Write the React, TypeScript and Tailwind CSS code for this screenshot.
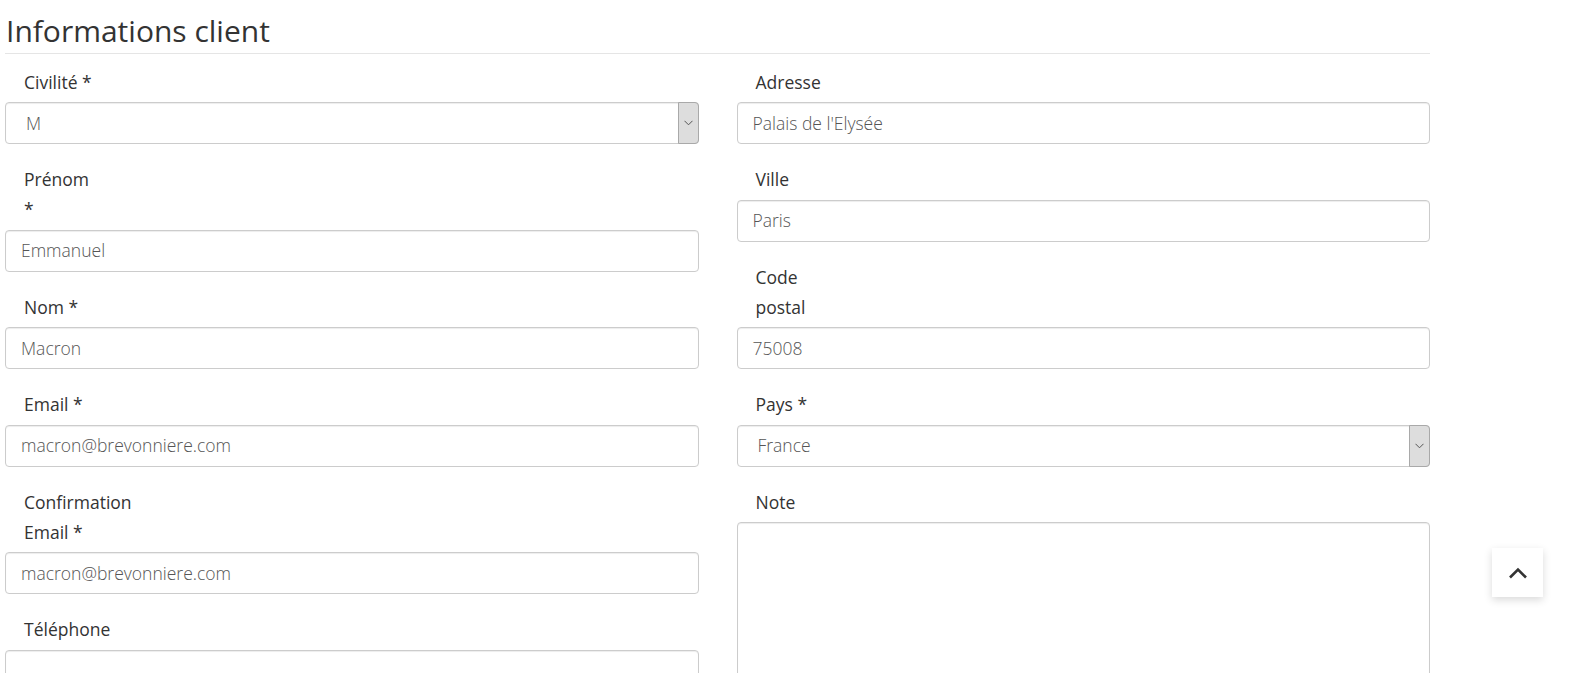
import React from "react";

const font = { fontFamily: '"Open Sans", "Noto Sans", "Liberation Sans", sans-serif' };

function Label({ lines }: { lines: string[] }) {
  return (
    <div className="pl-[19px] mb-[5.5px] text-[17.5px] leading-[30px] text-[#333]">
      {lines.map((l, i) => (
        <div key={i}>{l}</div>
      ))}
    </div>
  );
}

function TextInput({ value }: { value: string }) {
  return (
    <div className="h-[42px] w-full rounded-[4px] border border-[#cccccc] bg-white shadow-[inset_0_1px_1px_rgba(0,0,0,0.075)] flex items-center pl-[15px] text-[17.5px] font-light text-[#555]">
      {value}
    </div>
  );
}

function SelectInput({ value }: { value: string }) {
  return (
    <div className="h-[42px] w-full rounded-[4px] border border-[#cccccc] bg-white shadow-[inset_0_1px_1px_rgba(0,0,0,0.075)] flex items-stretch text-[17.5px] font-light text-[#555]">
      <div className="flex-1 flex items-center pl-[20px]">{value}</div>
      <div className="w-[21px] -my-px -mr-px rounded-r-[4px] border border-[#a9a9a9] bg-[#dddddd] flex items-center justify-center">
        <svg width="9" height="6" viewBox="0 0 9 6">
          <polyline points="0.5,0.8 4.5,4.8 8.5,0.8" fill="none" stroke="#555" strokeWidth="1" />
        </svg>
      </div>
    </div>
  );
}

function Field({ lines, children }: { lines: string[]; children: React.ReactNode }) {
  return (
    <div className="mb-[20px]">
      <Label lines={lines} />
      {children}
    </div>
  );
}

export default function App() {
  return (
    <div className="bg-white min-h-screen relative overflow-hidden h-[673px]" style={font}>
      <div className="ml-[5px] w-[1425px]">
        <h3 className="mt-[10px] pl-[1px] pb-[2px] text-[30px] leading-[41px] text-[#333] border-b border-[#e5e5e5]">
          Informations client
        </h3>
        <div className="mt-[12.5px] grid grid-cols-2 gap-x-[38px]">
          <div>
            <Field lines={["Civilité *"]}>
              <SelectInput value="M" />
            </Field>
            <Field lines={["Prénom", "*"]}>
              <TextInput value="Emmanuel" />
            </Field>
            <Field lines={["Nom *"]}>
              <TextInput value="Macron" />
            </Field>
            <Field lines={["Email *"]}>
              <TextInput value="macron@brevonniere.com" />
            </Field>
            <Field lines={["Confirmation", "Email *"]}>
              <TextInput value="macron@brevonniere.com" />
            </Field>
            <Field lines={["Téléphone"]}>
              <TextInput value="" />
            </Field>
          </div>
          <div>
            <Field lines={["Adresse"]}>
              <TextInput value="Palais de l'Elysée" />
            </Field>
            <Field lines={["Ville"]}>
              <TextInput value="Paris" />
            </Field>
            <Field lines={["Code", "postal"]}>
              <TextInput value="75008" />
            </Field>
            <Field lines={["Pays *"]}>
              <SelectInput value="France" />
            </Field>
            <Field lines={["Note"]}>
              <div className="h-[220px] w-full rounded-[4px] border border-[#cccccc] bg-white shadow-[inset_0_1px_1px_rgba(0,0,0,0.075)]" />
            </Field>
          </div>
        </div>
      </div>
      <button className="absolute left-[1492px] top-[548px] w-[51px] h-[49px] bg-white shadow-[0_3px_8px_rgba(0,0,0,0.15)] flex items-center justify-center">
        <svg width="20" height="12" viewBox="0 0 20 12">
          <polyline points="2,10.5 10,2.5 18,10.5" fill="none" stroke="#333" strokeWidth="2.6" />
        </svg>
      </button>
    </div>
  );
}
